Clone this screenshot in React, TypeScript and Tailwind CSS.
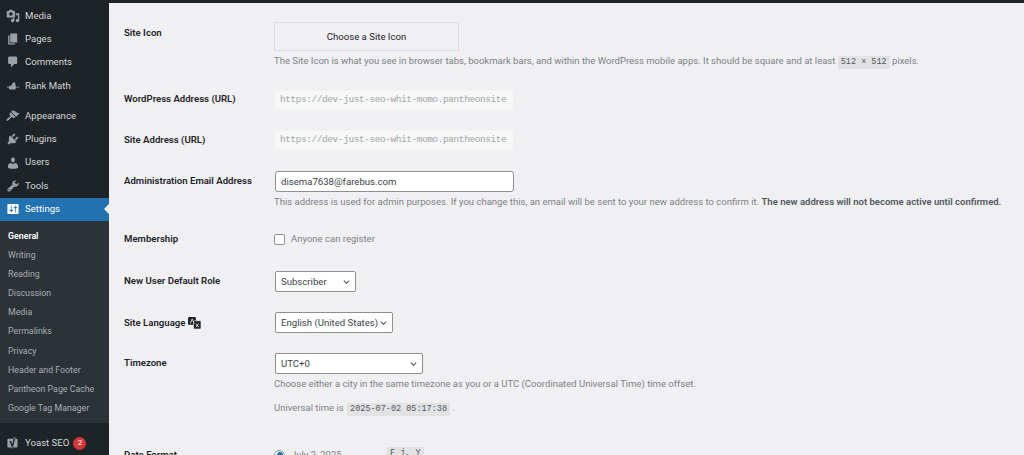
import type { ReactNode } from "react";

const icons: Record<string, string> = {
  media:
    "M13 11V4c0-.55-.45-1-1-1h-1.67L9 1H5L3.67 3H2c-.55 0-1 .45-1 1v7c0 .55.45 1 1 1h10c.55 0 1-.45 1-1zM7 4.5c1.38 0 2.5 1.12 2.5 2.5S8.38 9.5 7 9.5 4.5 8.38 4.5 7 5.62 4.5 7 4.5zM14 6h5v10.5c0 1.38-1.12 2.5-2.5 2.5S14 17.88 14 16.5s1.12-2.5 2.5-2.5c.17 0 .34.02.5.05V9h-3V6zm-4 8.05V13h2v3.5c0 1.38-1.12 2.5-2.5 2.5S7 17.88 7 16.5 8.12 14 9.5 14c.17 0 .34.02.5.05z",
  pages: "M6 15V2h10v13H6zm-1 1h8v2H3V5h2v11z",
  comments:
    "M5 2h9c1.1 0 2 .9 2 2v7c0 1.1-.9 2-2 2h-2l-5 5v-5H5c-1.1 0-2-.9-2-2V4c0-1.1.9-2 2-2z",
  rank: "M1 11h3l1.500-1.500h2L10 5h3l1 6h5v1.200h-5l-.5 2.800H4.500l-.5-2.800H1z",
  appearance:
    "M14.48 11.06L7.41 3.99l1.5-1.5c.5-.56 2.3-.47 3.51.32 1.21.8 1.43 1.28 2.91 2.1 1.18.64 2.45 1.26 4.45.85zm-.71.71L6.7 4.7 4.93 6.47c-.39.39-.39 1.02 0 1.41l1.06 1.06c.39.39.39 1.03 0 1.42-.6.6-1.43 1.11-2.21 1.69-.35.26-.7.53-1.01.84-1.43 1.43-2.4 3.1-1.77 3.73.63.63 2.3-.34 3.73-1.77.31-.31.58-.66.84-1.01.58-.78 1.09-1.61 1.69-2.21.39-.39 1.03-.39 1.42 0l1.06 1.06c.39.39 1.02.39 1.41 0z",
  plugins:
    "M13.11 4.36L9.87 7.6 8 5.73l3.24-3.24c.35-.34 1.05-.2 1.56.32.52.51.66 1.21.31 1.55zm-8 1.77l.91-1.12 9.01 9.01-1.19.84c-.71.71-2.63 1.16-3.82 1.16H6.14L4.9 17.26c-.59.59-1.54.59-2.12 0-.59-.58-.59-1.53 0-2.12l1.24-1.24v-3.88c0-1.13.4-3.19 1.09-3.89zm7.26 3.97l3.24-3.24c.34-.35 1.04-.21 1.55.31.52.51.66 1.21.31 1.55l-3.24 3.25z",
  users:
    "M10 9.25c-2.27 0-2.73-3.44-2.73-3.44C7 4.02 7.82 2 9.97 2c2.16 0 2.98 2.02 2.71 3.81 0 0-.41 3.44-2.68 3.44zm0 2.57L12.72 10c2.39 0 4.52 2.33 4.52 4.53v2.49s-3.65 1.13-7.24 1.13c-3.65 0-7.24-1.13-7.24-1.13v-2.49c0-2.25 1.94-4.48 4.47-4.48z",
  tools:
    "M16.68 9.77c-1.34 1.34-3.3 1.67-4.95.99l-5.41 6.52c-.99.99-2.59.99-3.58 0s-.99-2.59 0-3.57l6.52-5.42c-.68-1.65-.35-3.61.99-4.95 1.28-1.28 3.12-1.62 4.72-1.06l-2.89 2.89 2.82 2.82 2.86-2.87c.53 1.58.18 3.39-1.08 4.65zM3.81 16.21c.4.39 1.04.39 1.43 0 .4-.4.4-1.04 0-1.43-.39-.4-1.03-.4-1.43 0-.39.39-.39 1.03 0 1.43z",
  settings:
    "M18 16V4c0-.55-.45-1-1-1H3c-.55 0-1 .45-1 1v12c0 .55.45 1 1 1h14c.55 0 1-.45 1-1zM8 11h1c.55 0 1 .45 1 1s-.45 1-1 1H8v1.500c0 .28-.22.5-.5.5s-.5-.22-.5-.5V13H6c-.55 0-1-.45-1-1s.45-1 1-1h1V5.500c0-.28.22-.5.5-.5s.5.22.5.5V11zm5-2h-1c-.55 0-1-.45-1-1s.45-1 1-1h1V5.500c0-.28.22-.5.5-.5s.5.22.5.5V7h1c.55 0 1 .45 1 1s-.45 1-1 1h-1v5.500c0 .28-.22.5-.5.5s-.5-.22-.5-.5V9z",
  yoast:
    "M3.500 4H15c1 0 1.500.7 1.500 1.500V15c0 1-.7 1.500-1.500 1.500H3.500C2.500 16.500 2 15.800 2 15V5.500C2 4.600 2.700 4 3.500 4zM5 7h2.300l2 4.800L11.200 2h2.500L10 15.500c-.4 1.200-1 2.200-2.500 2.800l-.7-1.800c.8-.4 1.200-.8 1.500-1.600z",
};

const DashIcon = ({ name, className }: { name: string; className: string }) => (
  <svg viewBox="0 0 20 20" fill="currentColor" className={className}>
    <path fillRule="evenodd" d={icons[name]} />
  </svg>
);

const MenuItem = ({ icon, label, active, children }: { icon: string; label: string; active?: boolean; children?: ReactNode }) => (
  <div
    className={`relative flex h-[23.3px] items-center ${active ? "bg-[#2271b1] text-white" : "text-[#d4d6d8]"}`}
  >
    <span className={`flex w-[25px] justify-center ${active ? "text-white" : "text-[#9ca1a6]"}`}>
      <DashIcon name={icon} className="ml-[1px] h-[14px] w-[14px]" />
    </span>
    <span className="whitespace-nowrap text-[9.6px]">{label}</span>
    {children}
    {active && (
      <span className="absolute right-0 top-1/2 h-0 w-0 -translate-y-1/2 border-y-[5px] border-r-[5px] border-y-transparent border-r-[#f0f0f3]" />
    )}
  </div>
);

const submenu = [
  "General",
  "Writing",
  "Reading",
  "Discussion",
  "Media",
  "Permalinks",
  "Privacy",
  "Header and Footer",
  "Pantheon Page Cache",
  "Google Tag Manager",
];

const Sidebar = () => (
  <aside className="w-[109px] shrink-0 bg-[#1d2327] pt-[1.2px]">
    <MenuItem icon="media" label="Media" />
    <MenuItem icon="pages" label="Pages" />
    <MenuItem icon="comments" label="Comments" />
    <MenuItem icon="rank" label="Rank Math" />
    <div className="h-[7px]" />
    <MenuItem icon="appearance" label="Appearance" />
    <MenuItem icon="plugins" label="Plugins" />
    <MenuItem icon="users" label="Users" />
    <MenuItem icon="tools" label="Tools" />
    <MenuItem icon="settings" label="Settings" active />
    <div className="bg-[#2c3338] pb-[5px] pt-[5.7px]">
      {submenu.map((item, i) => (
        <div
          key={item}
          className={`flex h-[19.2px] items-center whitespace-nowrap pl-[8px] text-[8.8px] ${i === 0 ? "font-semibold text-white" : "text-[#a9adb1]"}`}
        >
          {item}
        </div>
      ))}
    </div>
    <div className="pt-[8px]">
      <MenuItem icon="yoast" label="Yoast SEO">
        <span className="ml-[4px] flex h-[13px] w-[13px] items-center justify-center rounded-full bg-[#d63638] text-[8px] text-white">
          2
        </span>
      </MenuItem>
    </div>
  </aside>
);

const Row = ({ label, className, children, labelClass = "pt-[3px]" }: { label: ReactNode; className: string; children: ReactNode; labelClass?: string }) => (
  <div className={`flex ${className}`}>
    <div className={`w-[150px] shrink-0 text-[9.6px] font-semibold leading-[14px] text-[#1d2327] ${labelClass}`}>{label}</div>
    <div className="min-w-0 flex-1 whitespace-nowrap text-[9.53px] leading-[14px] text-[#7c8085]">{children}</div>
  </div>
);

const Code = ({ children, className = "" }: { children: ReactNode; className?: string }) => (
  <code
    className={`inline-block bg-[#e2e2e4] px-[3px] font-['Liberation_Mono',monospace] text-[8.5px] leading-[13px] text-[#50575e] ${className}`}
  >
    {children}
  </code>
);

const ReadonlyUrl = () => (
  <div className="ml-[1px] flex h-[18px] w-[238px] items-center rounded-[2px] bg-[#f6f7f7] pl-[5px] font-['Liberation_Mono',monospace] text-[9.5px] tracking-[-0.44px] text-[#a3a6a9]">
    https://dev-just-seo-whit-momo.pantheonsite
  </div>
);

const Select = ({ value, className }: { value: string; className: string }) => (
  <div
    className={`flex h-[21px] items-center justify-between rounded-[2px] border border-[#8c8f94] bg-white pl-[5px] pr-[5px] text-[9.6px] text-[#3c434a] ${className}`}
  >
    <span>{value}</span>
    <svg viewBox="0 0 10 6" className="h-[4px] w-[7px]" fill="none" stroke="#50575e" strokeWidth="1.600">
      <path d="M1 1l4 4 4-4" />
    </svg>
  </div>
);

export default function App() {
  return (
    <div className="h-[455px] w-[1024px] overflow-hidden bg-[#f0f0f3] font-['Roboto',sans-serif]">
      <div className="h-[3px] bg-[#1d2327]" />
      <div className="flex h-[452px]">
        <Sidebar />
        <main className="flex-1 pl-[15px] pt-[19px]">
          <Row label="Site Icon" className="" labelClass="pt-[4px]">
            <div className="flex h-[29px] w-[185px] items-center justify-center border border-[#dcdcde] text-[9.6px] text-[#1d2327]">
              Choose a Site Icon
            </div>
            <p className="mt-[3px]">
              The Site Icon is what you see in browser tabs, bookmark bars, and within the WordPress mobile apps. It
              should be square and at least <Code>512 × 512</Code> pixels.
            </p>
          </Row>
          <Row label="WordPress Address (URL)" className="mt-[22px]" labelClass="pt-[1px]">
            <ReadonlyUrl />
          </Row>
          <Row label="Site Address (URL)" className="mt-[22px]" labelClass="pt-[2px]">
            <ReadonlyUrl />
          </Row>
          <Row label="Administration Email Address" className="mt-[22px]">
            <div className="ml-[1px] flex h-[21px] w-[239px] items-center rounded-[3px] border border-[#8c8f94] bg-white pl-[5px] text-[9.6px] text-[#3c434a]">
              disema7638@farebus.com
            </div>
            <p className="mt-[3px]">
              This address is used for admin purposes. If you change this, an email will be sent to your new address to
              confirm it. <strong className="font-semibold text-[#50575e]">The new address will not become active until confirmed.</strong>
            </p>
          </Row>
          <Row label="Membership" className="mt-[20px]">
            <label className="flex h-[20px] items-center">
              <span className="h-[11px] w-[11px] rounded-[2px] border border-[#8c8f94] bg-white" />
              <span className="ml-[6px]">Anyone can register</span>
            </label>
          </Row>
          <Row label="New User Default Role" className="mt-[22px]">
            <Select value="Subscriber" className="ml-[1px] w-[81px]" />
          </Row>
          <Row label={<span className="flex items-center gap-[3px]">Site Language
            <svg viewBox="0 0 14 13" className="h-[12px] w-[13px]">
              <rect x="0" y="0" width="8.500" height="8.500" rx="1" fill="#1d2327" />
              <rect x="6" y="4" width="8" height="9" rx="1" fill="#1d2327" stroke="#f0f0f3" strokeWidth="0.600" />
              <path d="M2.500 7l2-5 2 5M8.500 7l3 4M11.500 7l-3 4" fill="none" stroke="#f0f0f3" strokeWidth="0.900" />
            </svg>
          </span>} className="mt-[20px]" labelClass="pt-[4px]">
            <Select value="English (United States)" className="ml-[1px] w-[118px]" />
          </Row>
          <Row label="Timezone" className="mt-[20px]">
            <Select value="UTC+0" className="ml-[1px] w-[148px]" />
            <p className="mt-[3px]">Choose either a city in the same timezone as you or a UTC (Coordinated Universal Time) time offset.</p>
            <p className="mt-[10px]">
              Universal time is <Code className="ml-[1px]">2025-07-02 05:17:38</Code> .
            </p>
          </Row>
          <Row label="Date Format" className="mt-[29px]">
            <div className="mt-[3px] flex items-center">
              <span className="flex h-[11px] w-[11px] items-center justify-center rounded-full border border-[#8c8f94] bg-white">
                <span className="h-[6px] w-[6px] rounded-full bg-[#2271b1]" />
              </span>
              <span className="ml-[6px] w-[96px]">July 2, 2025</span>
              <Code className="-mt-[4px]">F j, Y</Code>
            </div>
          </Row>
        </main>
      </div>
    </div>
  );
}
